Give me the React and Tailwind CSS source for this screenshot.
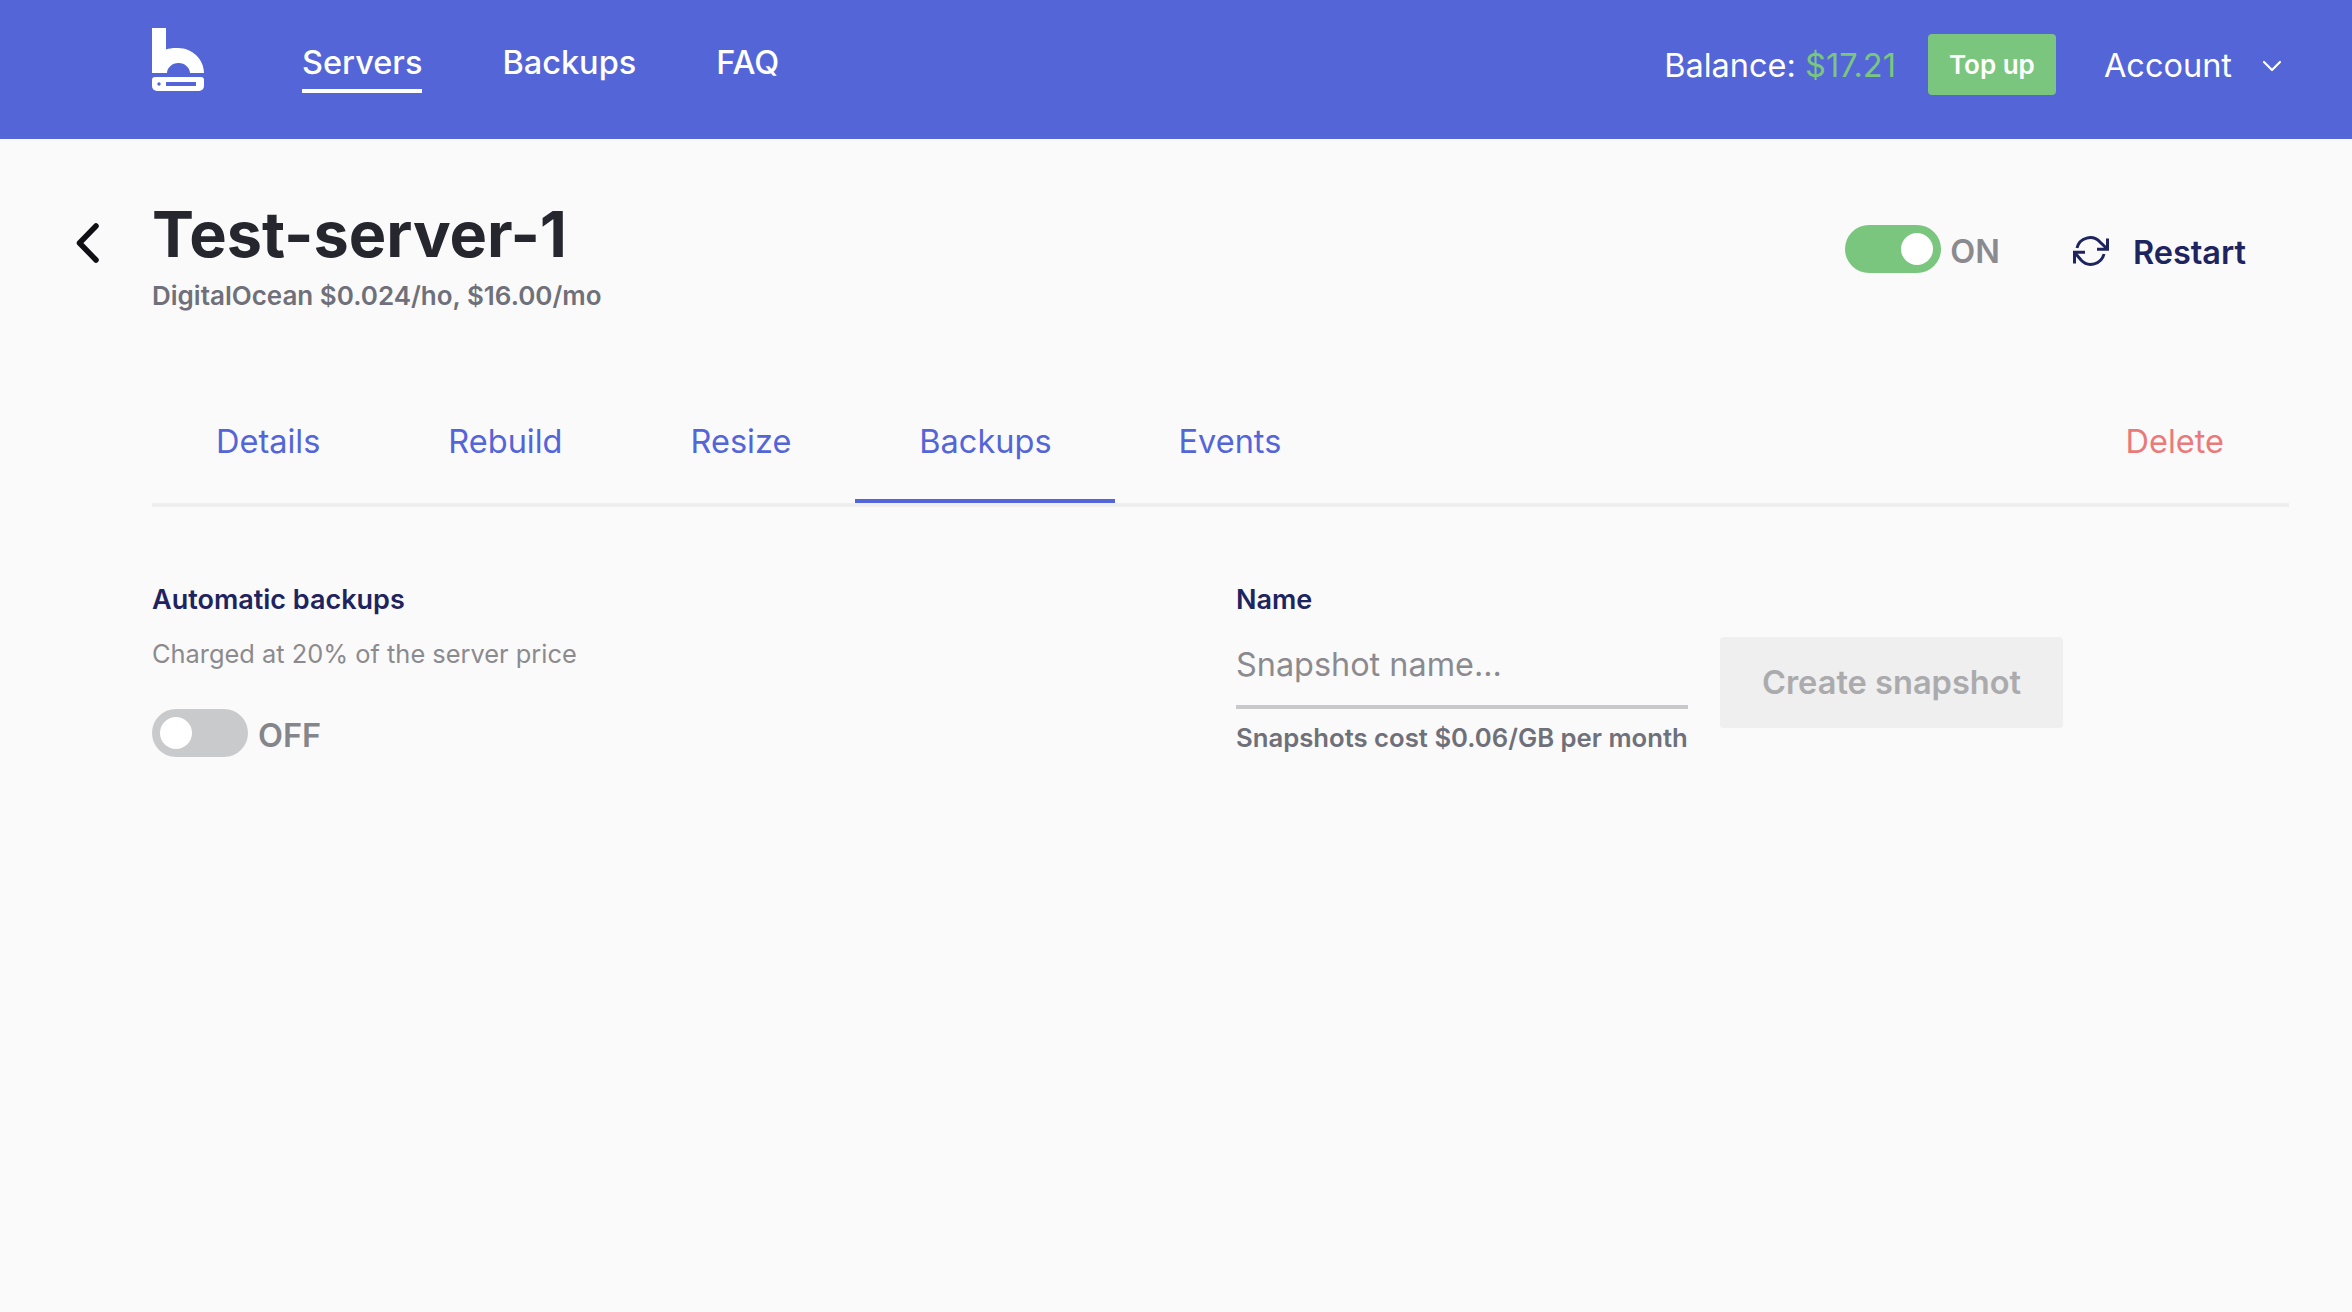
import React from "react";

function Logo() {
  return (
    <svg width="52" height="63" viewBox="0 0 52 63" fill="none">
      <path d="M0 0H14V21.500C17 20.500 20 20 24 20H26C40 20 52 31 52 45H38C38 40 33 35 26.500 35C20 35 15 40 15 45H0Z" fill="#fff" />
      <path d="M3 49H49A3 3 0 0 1 52 52V58A5 5 0 0 1 47 63H5A5 5 0 0 1 0 58V52A3 3 0 0 1 3 49Z" fill="#fff" />
      <circle cx="7" cy="56" r="1.700" fill="#5465d8" />
      <rect x="14" y="54" width="30" height="4" fill="#5465d8" />
    </svg>
  );
}

function Toggle({ on }) {
  return (
    <div
      className={
        on
          ? "w-24 h-12 rounded-full bg-[#7bc67f] flex items-center justify-end pr-2"
          : "w-24 h-12 rounded-full bg-[#c9cacc] flex items-center justify-start pl-2"
      }
    >
      <div className="w-8 h-8 rounded-full bg-white" />
    </div>
  );
}

function App() {
  const tabs = ["Details", "Rebuild", "Resize", "Backups", "Events"];

  return (
    <div className="w-[2352px] h-[1312px] bg-[#fafafb] font-['Inter',sans-serif] overflow-hidden">
      <header className="h-[139px] bg-[#5465d8] flex items-start pl-[152px] pr-[70px] text-white">
        <div className="mt-[28px]">
          <Logo />
        </div>
        <nav className="flex gap-[80px] ml-[98px] mt-[39px] text-[32.500px] font-medium">
          <a className="border-b-[4px] border-white pb-[1px]">Servers</a>
          <a>Backups</a>
          <a>FAQ</a>
        </nav>
        <div className="ml-auto mt-[34px] flex items-center text-[32.500px]">
          <span className="mt-[3px]">
            Balance: <span className="text-[#7bc67f]">$17.21</span>
          </span>
          <button className="ml-[32px] w-[128px] h-[61px] rounded-[4px] bg-[#7bc67f] text-[26px] font-semibold">
            Top up
          </button>
          <span className="ml-[48px] mt-[3px]">Account</span>
          <svg className="ml-[30px] mt-[3px]" width="20" height="12" viewBox="0 0 20 12" fill="none" stroke="#fff" strokeWidth="2.200" strokeLinecap="round" strokeLinejoin="round">
            <path d="M2 2l8 8 8-8" />
          </svg>
        </div>
      </header>

      <main className="pl-[152px] pr-[63px]">
        <div className="flex items-start h-[244px] relative">
          <svg className="absolute left-[-78px] top-[82px]" width="26" height="44" viewBox="0 0 26 44" fill="none" stroke="#0f0f14" strokeWidth="5.500" strokeLinecap="round" strokeLinejoin="round">
            <path d="M22 5L5.500 22L22 39" />
          </svg>
          <div className="pt-[63px]">
            <h1 className="text-[63px] leading-[64px] font-bold text-[#25262e]">Test-server-1</h1>
            <p className="mt-[10px] text-[26px] font-semibold text-[#6f7079]">DigitalOcean $0.024/ho, $16.00/mo</p>
          </div>
          <div className="ml-auto flex items-center mt-[81.500px] pr-[43px]">
            <Toggle on />
            <span className="ml-[9px] mt-[6px] text-[32.500px] font-semibold text-[#8b8b8f]">ON</span>
            <svg className="ml-[73px] mt-[5px]" width="36" height="30" viewBox="0 0 36 30" fill="none" stroke="#1e2460" strokeWidth="3">
              <path d="M4 12A13.500 13.500 0 0 1 27 6L34.500 13.300" />
              <path d="M34.500 2.500V13.300H24" />
              <path d="M31 18A13.500 13.500 0 0 1 8 24L1.500 16.300" />
              <path d="M1.500 27.500V16.300H12" />
            </svg>
            <span className="ml-[24px] mt-[8px] text-[32.500px] font-semibold text-[#1e2460]">Restart</span>
          </div>
        </div>

        <div className="flex h-[124px] border-b-[4px] border-[#eeeeef] text-[32.500px] text-[#5465d8]">
          {tabs.map((tab) => (
            <div
              key={tab}
              className={
                tab === "Backups"
                  ? "pl-[64px] pr-[63px] h-[120px] pt-[2px] flex items-center border-b-[4px] border-[#5465d8]"
                  : "px-[64px] h-[118px] flex items-center"
              }
            >
              {tab}
            </div>
          ))}
          <div className="ml-auto pl-[64px] pr-[65px] h-[118px] flex items-center text-[#ea7a7a]">Delete</div>
        </div>

        <div className="flex mt-[76px]">
          <div className="w-[1084px]">
            <h2 className="text-[27px] leading-[34px] font-semibold text-[#1e2460]">Automatic backups</h2>
            <p className="mt-[20px] text-[25.400px] leading-[34px] text-[#8b8b8f]">Charged at 20% of the server price</p>
            <div className="flex items-center mt-[35px]">
              <Toggle />
              <span className="ml-[10px] mt-[6px] text-[32.500px] font-semibold text-[#85868b]">OFF</span>
            </div>
          </div>
          <div className="w-[452px]">
            <label className="block text-[27px] leading-[34px] font-semibold text-[#1e2460]">Name</label>
            <input
              className="mt-[7px] w-full h-[85px] border-b-[4px] border-[#c9c9cc] bg-transparent text-[32.400px] outline-none placeholder:text-[#8b8b8f]"
              placeholder="Snapshot name..."
            />
            <p className="mt-[12px] text-[25.700px] leading-[34px] font-semibold text-[#6f7079] whitespace-nowrap">Snapshots cost $0.06/GB per month</p>
          </div>
          <button className="ml-[32px] mt-[54px] w-[343px] h-[91px] rounded-[4px] bg-[#efefef] text-[32.600px] font-semibold text-[#ababad]">
            Create snapshot
          </button>
        </div>
      </main>
    </div>
  );
}

export default App;
